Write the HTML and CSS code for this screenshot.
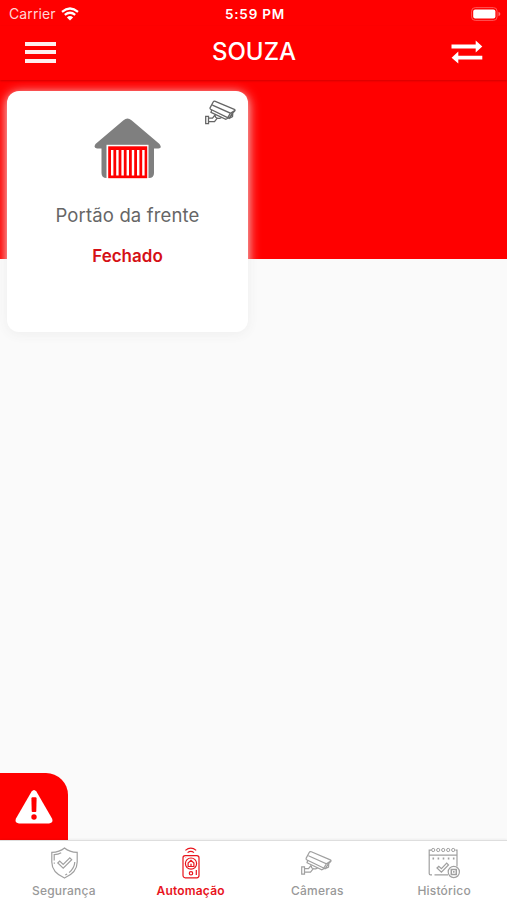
FILE: index.html
```
<!DOCTYPE html>
<html lang="pt-BR">

<head>
    <meta charset="UTF-8">
    <meta name="viewport" content="width=device-width, initial-scale=1.0">
    <title>Automação</title>
    <link rel="stylesheet" href="styles.css">
</head>

<body>
    <svg class="symbols" width="0" height="0">
        <symbol id="camera" viewBox="0 0 32 25">
            <path d="M5.2 7.6 8.2 2Q8.9.7 10.3 1.3L29.3 9.4Q30.6 10.1 29.7 11L27.4 13.2 24.1 18.3 5.6 9.3Q4.7 8.7 5.2 7.6ZM7.4 5.2 25.4 13.2 29.7 10.6M25.4 13.2 22.8 17.6M6.7 10 6 12.3 20.8 19.3 23.2 18M27.8 13.2 27.5 16.6 24.2 18.3" />
            <path d="M.7 16.3H3.5V23.7H.7ZM3.5 18.2H7.5L10.3 14.6M3.5 21.6H9.5L12.3 18.1 14.8 18.4 16.6 17.5M10.5 15.2Q9.7 17.7 12.5 18.1" />
        </symbol>
    </svg>

    <div class="status-bar">
        <div class="carrier">
            <span>Carrier</span>
            <svg class="wifi" width="18" height="14" viewBox="0 0 18 14">
                <path d="M1 4.8Q9-1.8 17 4.8M3.8 7.9Q9 3.6 14.2 7.9" fill="none" stroke="#fff" stroke-width="2.2" />
                <path d="M9 13.5 5.9 10.4Q9 7.7 12.1 10.4Z" fill="#fff" />
            </svg>
        </div>
        <span class="time">5:59 PM</span>
        <svg class="battery" width="30" height="14" viewBox="0 0 30 14">
            <rect x=".6" y=".6" width="25.5" height="12.8" rx="3.6" fill="none" stroke="#ff5555" stroke-width="1" />
            <rect x="2.2" y="2.4" width="22.2" height="9.2" rx="2" fill="#fff" />
            <path d="M27.5 4.8Q29.4 5.5 29.4 7T27.5 9.2Z" fill="#ff7070" />
        </svg>
    </div>

    <header class="header">
        <button class="menu-button" aria-label="Menu"><i></i><i></i><i></i></button>
        <h1>SOUZA</h1>
        <button class="swap-button" aria-label="Trocar">
            <svg width="32" height="24" viewBox="0 0 32 24">
                <path d="M.5 4.6H24.7V.4L31.3 6.6 24.7 12.4V8.5H.5ZM31.3 15.8H7.3V11.6L.6 17.8 7.3 23.6V19.6H31.3Z" fill="#fff" />
            </svg>
        </button>
    </header>

    <main class="content">
        <div class="card">
            <svg class="card-camera" width="32" height="25"><use href="#camera" /></svg>
            <svg class="gate" width="68" height="62" viewBox="0 0 68 62">
                <path d="M29.5 2.2Q33.5-1 37.5 2.2L65.5 26Q68.5 30.3 64.5 30.5H60V55Q60 60 55 60H12.5Q7.5 60 7.5 55V30.5H3Q-1 30 1.5 26Z" fill="#7f7f7f" />
                <rect x="12.5" y="26.8" width="42" height="34.5" fill="#fff" />
                <rect x="14.2" y="28.3" width="39" height="31.9" fill="#f00" />
                <path d="M18.2 32V57.6M23.4 32V57.6M28.6 32V57.6M33.8 32V57.6M39 32V57.6M44.2 32V57.6M49.4 32V57.6" stroke="#fff" stroke-width="2.4" />
            </svg>
            <p class="name">Portão da frente</p>
            <p class="state">Fechado</p>
        </div>
        <button class="alert-button" aria-label="Alerta">
            <svg width="38" height="34" viewBox="0 0 38 34">
                <path d="M16.6 1.6Q19-1.4 21.4 1.6L37 28.5Q38.7 33 34 33.5H4Q-.7 33 1 28.5Z" fill="#fff" />
                <path d="M16.4 8.5Q16.4 7.3 17.6 7.3H20.4Q21.6 7.3 21.6 8.5L21.3 21.3Q21.2 22 20.5 22H17.5Q16.8 22 16.7 21.3Z" fill="#f00" />
                <circle cx="19" cy="27" r="2.7" fill="#f00" />
            </svg>
        </button>
    </main>

    <nav class="tab-bar">
        <a class="tab">
            <svg width="32" height="32" viewBox="0 0 32 32">
                <path d="M16.5 1Q21.5 5.3 29.2 5.3V15Q29.2 25.5 16.5 31 3.8 25.5 3.8 15V5.3Q11.5 5.3 16.5 1Z" />
                <path d="M6.2 13.5V7.6Q10.2 7.4 13.2 5.7M26.8 15Q26.5 21 21.1 25.6M19.1 27 17.3 28M6.3 15.4V16.7" />
                <path d="M9.8 16 11.7 14.1 15.2 17.5 21.8 10.8 23.7 12.7 15.2 21.2Z" />
            </svg>
            <span>Segurança</span>
        </a>
        <a class="tab active">
            <svg width="32" height="32" viewBox="0 0 32 32">
                <path d="M10.4 3.4Q15.8-1.2 21.2 3.4M12.6 5.6Q15.8 3.1 19 5.6" />
                <rect x="8" y="8.6" width="16" height="22.2" rx="2.2" />
                <circle cx="16" cy="16.6" r="5.6" />
                <path d="M13.1 19.5V16L16 13.3 18.9 16V19.5ZM16 19.5V16.7M10.6 11V10.8M21.3 28V23" />
                <circle cx="16" cy="26.3" r="1.7" />
            </svg>
            <span>Automação</span>
        </a>
        <a class="tab">
            <svg width="32" height="32" viewBox="0 0 32 32"><use href="#camera" y="3.5" width="32" height="25" /></svg>
            <span>Câmeras</span>
        </a>
        <a class="tab">
            <svg width="32" height="32" viewBox="0 0 32 32">
                <path d="M3.5 3.2H1.2V26.5Q1.2 27.8 2.5 27.8H4M6.5 27.8H20M29 19.5V3.2H27.5M1.2 8.2H29" />
                <g stroke-width="1">
                    <circle cx="5.2" cy="3" r="1.6" />
                    <circle cx="10.2" cy="3" r="1.6" />
                    <circle cx="15.2" cy="3" r="1.6" />
                    <circle cx="20.2" cy="3" r="1.6" />
                    <circle cx="25.2" cy="3" r="1.6" />
                </g>
                <path d="M4.5 11.5H26.5" stroke-width="2" stroke-dasharray="1.6 3.5" />
                <path d="M9 21 10.8 19.4 13.4 21.7 18.7 16.2 20.5 18 13.4 25.2Z" />
                <circle cx="25.8" cy="25" r="5.6" />
                <path d="M23.3 22.5H28.3V27.5H23.3ZM25.8 24V25.7" stroke-width="1.5" />
            </svg>
            <span>Histórico</span>
        </a>
    </nav>
</body>
</html>
```

FILE: styles.css
```
* {
    box-sizing: border-box;
}

body {
    font-family: Inter, "Liberation Sans", sans-serif;
    background-color: #fafafa;
    display: flex;
    flex-direction: column;
    height: 100vh;
    margin: 0;
    overflow: hidden;
}

button {
    background: none;
    border: none;
    padding: 0;
    cursor: pointer;
}

svg {
    display: block;
}

.symbols {
    position: absolute;
}

.status-bar {
    background-color: #ff0000;
    color: #ffffff;
    display: grid;
    grid-template-columns: 1fr auto 1fr;
    align-items: center;
    height: 26px;
    padding: 1px 6px 0 9px;
    font-size: 13px;
}

.carrier {
    display: flex;
    align-items: center;
    gap: 5px;
    color: #ffd5d5;
    font-size: 14px;
    letter-spacing: 0.12px;
}

.time {
    font-size: 13.5px;
    font-weight: 600;
    letter-spacing: 0.8px;
}

.battery {
    justify-self: end;
}

.header {
    background-color: #ff0000;
    display: grid;
    grid-template-columns: 1fr auto 1fr;
    align-items: center;
    height: 54px;
    padding: 0 24px 2px 25px;
    box-shadow: 0 1px 2px rgba(0, 0, 0, 0.18);
    z-index: 1;
}

.menu-button {
    display: flex;
    flex-direction: column;
    gap: 4.5px;
    width: 31px;
}

.menu-button i {
    background-color: #ffeeee;
    height: 4px;
}

.swap-button {
    justify-self: end;
}

h1 {
    color: #ffffff;
    font-size: 24px;
    font-weight: 500;
    line-height: 28px;
    margin: 0;
}

.content {
    flex: 1;
    display: flex;
    flex-direction: column;
    justify-content: space-between;
    align-items: flex-start;
    background: linear-gradient(#ff0000 179px, #fafafa 179px);
}

.card {
    background-color: #ffffff;
    border-radius: 12px;
    box-shadow: 0 2px 12px #eeeeee;
    display: flex;
    flex-direction: column;
    align-items: center;
    position: relative;
    width: 241px;
    height: 241px;
    margin: 11px 0 0 7px;
    padding-top: 27px;
}

.card-camera {
    position: absolute;
    top: 9px;
    right: 11px;
    stroke: #666666;
    fill: none;
    stroke-width: 1.3;
}

.name {
    color: #666666;
    font-size: 18.5px;
    line-height: 24px;
    letter-spacing: 0.15px;
    margin: 23px 0 0;
}

.state {
    color: #d51016;
    font-size: 17px;
    font-weight: 600;
    line-height: 22px;
    margin: 18px 0 0;
}

.alert-button {
    background-color: #ff0000;
    border-top-right-radius: 22px;
    display: flex;
    align-items: center;
    justify-content: center;
    width: 68px;
    height: 67px;
}

.tab-bar {
    background-color: #ffffff;
    border-top: 1px solid #dedede;
    box-shadow: 0 -1px 2px rgba(0, 0, 0, 0.05);
    display: grid;
    grid-template-columns: repeat(4, 1fr);
    height: 60px;
}

.tab {
    color: #999999;
    display: flex;
    flex-direction: column;
    align-items: center;
    gap: 3px;
    padding: 6px 0 0 1px;
    font-size: 12px;
    font-weight: 500;
    line-height: 17px;
    letter-spacing: 0.2px;
}

.tab svg {
    fill: none;
    stroke: #a0a0a0;
    stroke-width: 1.2;
}

.tab.active {
    color: #e8141c;
    font-weight: 600;
}

.tab.active svg {
    stroke: #e8141c;
}
```
